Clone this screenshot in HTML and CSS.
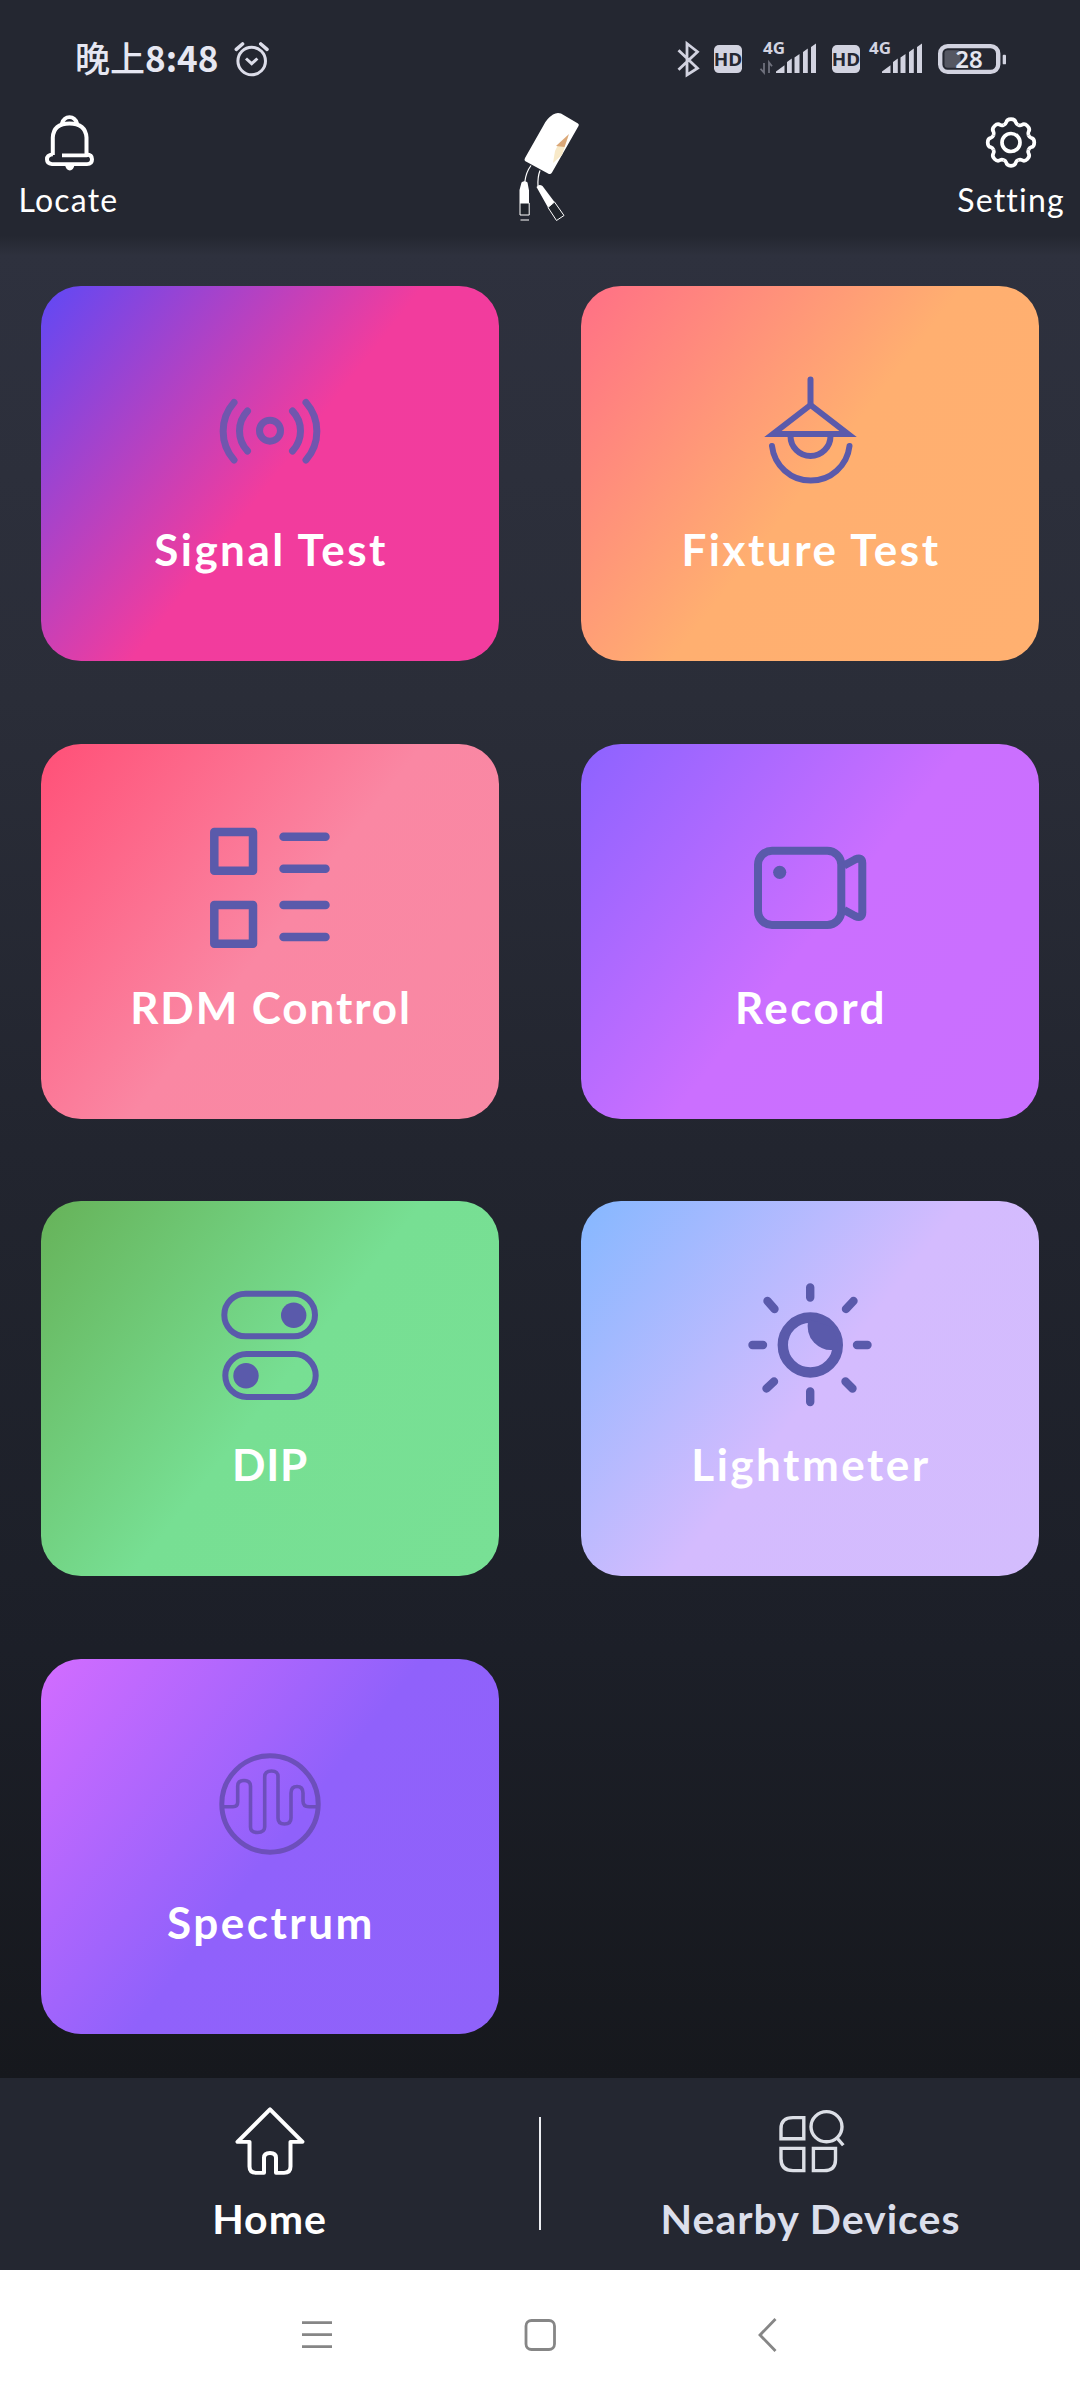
FILE: index.html
```html
<!DOCTYPE html>
<html lang="en">
<head>
<meta charset="utf-8">
<title>Home</title>
<link rel="stylesheet" href="styles.css">
</head>
<body>
<div class="app">
  <header class="top">
    <div class="status">
      <span class="time">晚上<b>8:48</b></span>
      <svg class="alarm" width="40" height="40" viewBox="232 42 40 40"><g fill="none" stroke="#dcdde9" stroke-width="3"><circle cx="251.7" cy="63" r="13.8"/><path d="M246 60.500l5.700 5.200 5.700-5.200"/><path stroke-linecap="round" stroke-width="3.600" d="M236.300 51.300l6.200-5.300M267 51.300l-6.200-5.300"/></g></svg>
      <svg class="indicators" width="340" height="54" viewBox="672 31 340 55.800" preserveAspectRatio="none">
        <path d="M678.500 52l19 18.500-10.500 7V45l10.500 8.500-19 18.500" fill="none" stroke="#d2d3e0" stroke-width="2.800"/>
        <rect x="714" y="46.500" width="28" height="29" rx="5" fill="#d2d3e0"/><text x="728" y="68" class="hd">HD</text>
        <text x="774" y="56" class="net">4G</text>
        <path d="M764 65v10l-3.500-4M769 75.500v-11l3 4" fill="none" stroke="#6f717d" stroke-width="1.800"/>
        <path id="bars" fill="#d2d3e0" d="M776 75.500v-1.500l8.500-6.500v8zM787 75.500v-11.500l4.800-3.500v15zM794.500 75.500v-16l5-3.700v19.700zM803 75.500v-21.800l4.800-3.500v25.300zM811 75.500v-27l5-3.500v30.500z"/>
        <rect x="832" y="46.500" width="28" height="29" rx="5" fill="#d2d3e0"/><text x="846" y="68" class="hd">HD</text>
        <text x="880" y="56" class="net">4G</text>
        <use href="#bars" x="106"/>
        <rect x="940.200" y="47.700" width="58" height="26.500" rx="7.500" fill="none" stroke="#d2d3e0" stroke-width="4.400"/>
        <rect x="944.500" y="52" width="16" height="18" rx="3" fill="#555762"/>
        <text x="969" y="70" class="pct">28</text>
        <rect x="1002.700" y="56.500" width="3.300" height="10" rx="1" fill="#d2d3e0"/>
      </svg>
    </div>
    <div class="bar">
      <div class="action">
        <svg width="60" height="64" viewBox="38 113.600 60 66.100" preserveAspectRatio="none"><g fill="none" stroke="#fff" stroke-width="4" stroke-linejoin="round"><path d="M51.800 160V142Q52.500 127.500 68.500 127.500T85.500 142V160.500H61"/><path d="M51.800 159.500Q46 160 46 164.500T51 169.500H86Q91 169.500 91 164.500T85.500 159.500"/><path d="M61 127.500Q63 121 68.500 121T76 127.500"/></g><path d="M64 170.500h9.500q-1 5.500-4.700 5.500t-4.800-5.500z" fill="#fff"/></svg>
        <span class="small locate">Locate</span>
      </div>
      <svg class="logo" width="100" height="130" viewBox="0 0 100 130">
        <path d="M53 14.500Q57 12 61 13.500L78 23.500Q79.500 24.500 78.500 26L52 72.500Q50.500 75 48 73.500L25 61Q24 60 25 58L44 24.500Q47 18.500 53 14.500z" fill="#fff"/>
        <path d="M68 37L62 55 53 63 55 51 58 45z" fill="#f8e9c8"/><path d="M69 34l-4.500 13-8.500-1z" fill="#dba878"/>
        <path d="M31 65.500Q26 72 24.800 82M40 70.500Q37.500 77 38 86" fill="none" stroke="#fff" stroke-width="1.200"/>
        <path d="M21.500 82.500q3-2.500 6 0l1.500 8v12.500h-9.500V90zM36.500 87q2.500-3.500 6-1l12 16-6.500 5.500z" fill="#fff"/>
        <path d="M20 103h9.200v12H20zM20.500 120h8.500M48 107.500l6.500-5.500 9.500 13.500-7.500 5z" fill="#20242b" stroke="#fff" stroke-width="1"/>
      </svg>
      <div class="action">
        <svg width="60" height="64" viewBox="-30 -32.500 60 64"><g fill="none" stroke="#fff" stroke-width="3.700"><circle r="9"/>
          <g id="g4"><g id="g2"><path id="g1" d="M-7.270-17.550Q-5.300-18.400-4.800-20Q-4.200-23.300 0-23.300Q4.200-23.300 4.800-20Q5.300-18.400 7.270-17.550"/><use href="#g1" transform="rotate(45)"/></g><use href="#g2" transform="rotate(90)"/></g><use href="#g4" transform="rotate(180)"/></g></svg>
        <span class="small setting">Setting</span>
      </div>
    </div>
  </header>

  <main class="grid">
    <section class="card signal">
      <svg class="icon" viewBox="-65 80 130 130"><g stroke-width="7"><circle cy="144.700" r="10.500"/><path stroke-linecap="round" d="M-22.500 125A29 29 0 0 0-22.500 165M22.500 125A29 29 0 0 1 22.500 165M-36 116.500A43.500 43.500 0 0 0-36 174M36 116.500A43.500 43.500 0 0 1 36 174"/></g></svg>
      <h2>Signal Test</h2>
    </section>
    <section class="card fixture">
      <svg class="icon" viewBox="-65 80 130 130"><g stroke-width="6"><path stroke-linecap="round" d="M.5 93.500V119M-38 160A39 39 0 0 0 39.500 160"/><path d="M.5 119L-37 148H38zM-19.500 150A20 20 0 0 0 20.500 150"/></g></svg>
      <h2>Fixture Test</h2>
    </section>
    <section class="card rdm">
      <svg class="icon" viewBox="-65 80 130 130"><g stroke-width="8.500" stroke-linejoin="round" stroke-linecap="round"><rect x="-55.700" y="88" width="38.700" height="38.700"/><rect x="-55.700" y="161" width="38.700" height="38.700"/><path d="M13.500 92.700H55.500M13.500 124.700H55.500M13.500 161H55.500M13.500 193H55.500"/></g></svg>
      <h2>RDM Control</h2>
    </section>
    <section class="card record">
      <svg class="icon" viewBox="-65 80 130 130"><g stroke-width="8"><rect x="-52" y="106.700" width="83.300" height="74.300" rx="14"/><path d="M34 121.500L45 115.500Q52.300 112.500 52.300 119V168.500Q52.300 175 45 172L34 166"/></g><circle class="solid" cx="-30.300" cy="128.300" r="6.600"/></svg>
      <h2>Record</h2>
    </section>
    <section class="card dip">
      <svg class="icon" viewBox="-65 80 130 130"><g stroke-width="6"><rect x="-45.700" y="92.700" width="90.700" height="42.600" rx="21.300"/><rect x="-44.700" y="153" width="90.400" height="43" rx="21.500"/></g><circle class="solid" cx="23.700" cy="114.200" r="12.700"/><circle class="solid" cx="-24" cy="174.700" r="12.700"/></svg>
      <h2>DIP</h2>
    </section>
    <section class="card light">
      <svg class="icon" viewBox="-65 80 130 130"><circle cx=".3" cy="144" r="27.500" stroke-width="10.400"/><path class="solid" d="M-1.700 118Q-4.500 133 4 141.500T23 149L28 144 22 126z"/><path stroke-width="8.400" stroke-linecap="round" d="M.2 86.500V96.500M.2 190.500V201M-57.500 144H-47M47 144H57.500M-42.500 100L-35.500 108M43.500 100L36 108M-36 180.500L-43.500 187.500M35.500 180.500L42.500 187.500"/></svg>
      <h2>Lightmeter</h2>
    </section>
    <section class="card spectrum">
      <svg class="icon" viewBox="-65 80 130 130"><circle cy="145" r="48.200" stroke-width="5"/><path stroke-width="3.600" d="M-46 147.700H-37Q-32.300 147.700-32.300 143V127Q-32.300 121.500-26 121.500T-19.500 127V168Q-19.500 173.500-12.500 173.500T-5.300 168V118Q-5.300 112 1.500 112T8 118V159Q8 165 14.500 165T21 159V134Q21 127.500 27 127.500T33 134V142Q33 147.700 39 147.700H47"/></svg>
      <h2>Spectrum</h2>
    </section>
  </main>

  <footer class="tabs">
    <div class="tab active">
      <svg width="80" height="80" viewBox="-40 41.300 80 82.600" preserveAspectRatio="none"><path d="M0 51L-32.500 84.500H-20.500V110Q-20.500 116.500-14 116.500H-6V101Q-6 96 0 96T6 101V116.500H14Q20.500 116.500 20.500 110V84.500H32.500z" fill="none" stroke="#fff" stroke-width="4" stroke-linejoin="round"/></svg>
      <span>Home</span>
    </div>
    <div class="divider"></div>
    <div class="tab">
      <svg width="80" height="80" viewBox="-40 41.300 80 82.600" preserveAspectRatio="none"><g fill="none" stroke="#dcdfe6" stroke-width="3.400"><path d="M-7.200 59.600V81.300H-30V71Q-30 59.600-18 59.600zM-7.200 91.200V114.300H-18Q-30 114.300-30 102V91.200zM2.400 91.200H24.500V103Q24.500 114.300 13 114.300H2.400zM26 80.500L32.300 88"/><circle cx="15.500" cy="68.900" r="15.500"/></g></svg>
      <span class="nearby">Nearby Devices</span>
    </div>
  </footer>

  <nav class="system">
    <svg width="480" height="50" viewBox="300 2310 480 50"><g fill="none" stroke="#868686" stroke-width="2.800"><path d="M302 2322.700H332M302 2334.700H332M302 2346.700H332M775.500 2319L760 2335 775.500 2351"/><rect x="526" y="2320.500" width="28.500" height="29" rx="5.500"/></g></svg>
  </nav>
</div>
</body>
</html>
```
FILE: styles.css
```css
* { box-sizing: border-box; }

body { margin: 0; font-family: Lato, "Noto Sans", sans-serif; color: #fff; }

.app {
  width: 1080px;
  height: 2400px;
  display: flex;
  flex-direction: column;
  background: linear-gradient(#2e313e 250px, #2a2d38 700px, #22252f 1150px, #1c1f28 1650px, #16181d 2078px);
}

.top { height: 256px; flex: none; background: linear-gradient(#242731 236px, rgba(36, 39, 49, 0) 256px); }

.status { height: 84px; padding: 30px 68px 0 75px; display: flex; }
.time {
  font: 500 35px/44px "Noto Sans CJK SC", "Noto Sans", sans-serif;
  color: #e6e7f2;
  width: 157px;
  margin-top: 5px;
  white-space: nowrap;
}
.time b { font-weight: 700; }
.alarm { margin-top: 10px; }
.indicators { margin-left: auto; }
.indicators text { font-family: "Noto Sans", sans-serif; text-anchor: middle; }
.hd { font-size: 19px; font-weight: 700; fill: #242731; }
.net { font-size: 17px; font-weight: 700; fill: #d2d3e0; }
.pct { font-size: 24px; font-weight: 600; fill: #e4e5ef; }

.bar { height: 172px; display: flex; justify-content: space-between; }
.action { width: 137px; padding-top: 26px; display: flex; flex-direction: column; align-items: center; }
.action:last-child { width: 138px; }
.logo { margin: 16px 0 0 20px; }
.small { font-size: 32px; line-height: 40px; margin-top: 6px; font-variant-ligatures: none; }
.locate { letter-spacing: 1.200px; }
.setting { letter-spacing: 1.200px; }

.grid {
  flex: none;
  height: 1822px;
  padding: 30px 41px 0;
  display: grid;
  grid-template-columns: 458px 458px;
  justify-content: space-between;
  align-content: start;
  row-gap: 82.700px;
}

.card {
  height: 375px;
  border-radius: 40px;
  padding-top: 80px;
  display: flex;
  flex-direction: column;
  align-items: center;
}
.card h2 {
  margin: 23px 0 0;
  padding-left: 2px;
  font-size: 44px;
  font-weight: 700;
  line-height: 60px;
  letter-spacing: 2.500px;
  white-space: nowrap;
}
.card.rdm h2 { letter-spacing: 1.900px; }
.card.dip h2 { letter-spacing: 0.800px; padding: 0; }

.icon { width: 130px; height: 130px; fill: none; stroke: #5a5aab; flex: none; }
.icon .solid { fill: #5a5aab; stroke: none; }

.signal { background: linear-gradient(128deg, #6548f2 2%, #f23c9d 51%, #f23c9e); }
.fixture { background: linear-gradient(128deg, #ff7285 2%, #ffaf70 51%, #ffb070); }
.rdm { background: linear-gradient(128deg, #ff5279 2%, #fa87a3 51%, #f889a4); }
.record { background: linear-gradient(128deg, #8f63ff 2%, #cb6fff 51%, #c96fff); }
.dip { background: linear-gradient(128deg, #67b45b 2%, #77df93 51%, #78e095); }
.light { background: linear-gradient(128deg, #88b8ff 2%, #d4bbfe 51%, #d3bcfd); }
.spectrum { background: linear-gradient(128deg, #d06cff 2%, #9061fb 51%, #8f62fa); }
.signal .icon { stroke: #7056ae; }
.spectrum .icon { stroke: #6d4fbb; }

.tabs { height: 192px; flex: none; background: #242731; display: flex; align-items: flex-start; }
.tab {
  flex: 1;
  padding-top: 22px;
  display: flex;
  flex-direction: column;
  align-items: center;
  font-size: 41px;
  font-weight: 700;
  line-height: 50px;
  color: #dcdfeb;
}
.tab.active { color: #fff; }
.tab span { margin-top: 14px; letter-spacing: 1px; white-space: nowrap; }
.divider { width: 2px; height: 113px; margin-top: 39px; background: #eceef2; }

.system { flex: 1; background: #fff; padding: 40px 0 0 300px; }
```
